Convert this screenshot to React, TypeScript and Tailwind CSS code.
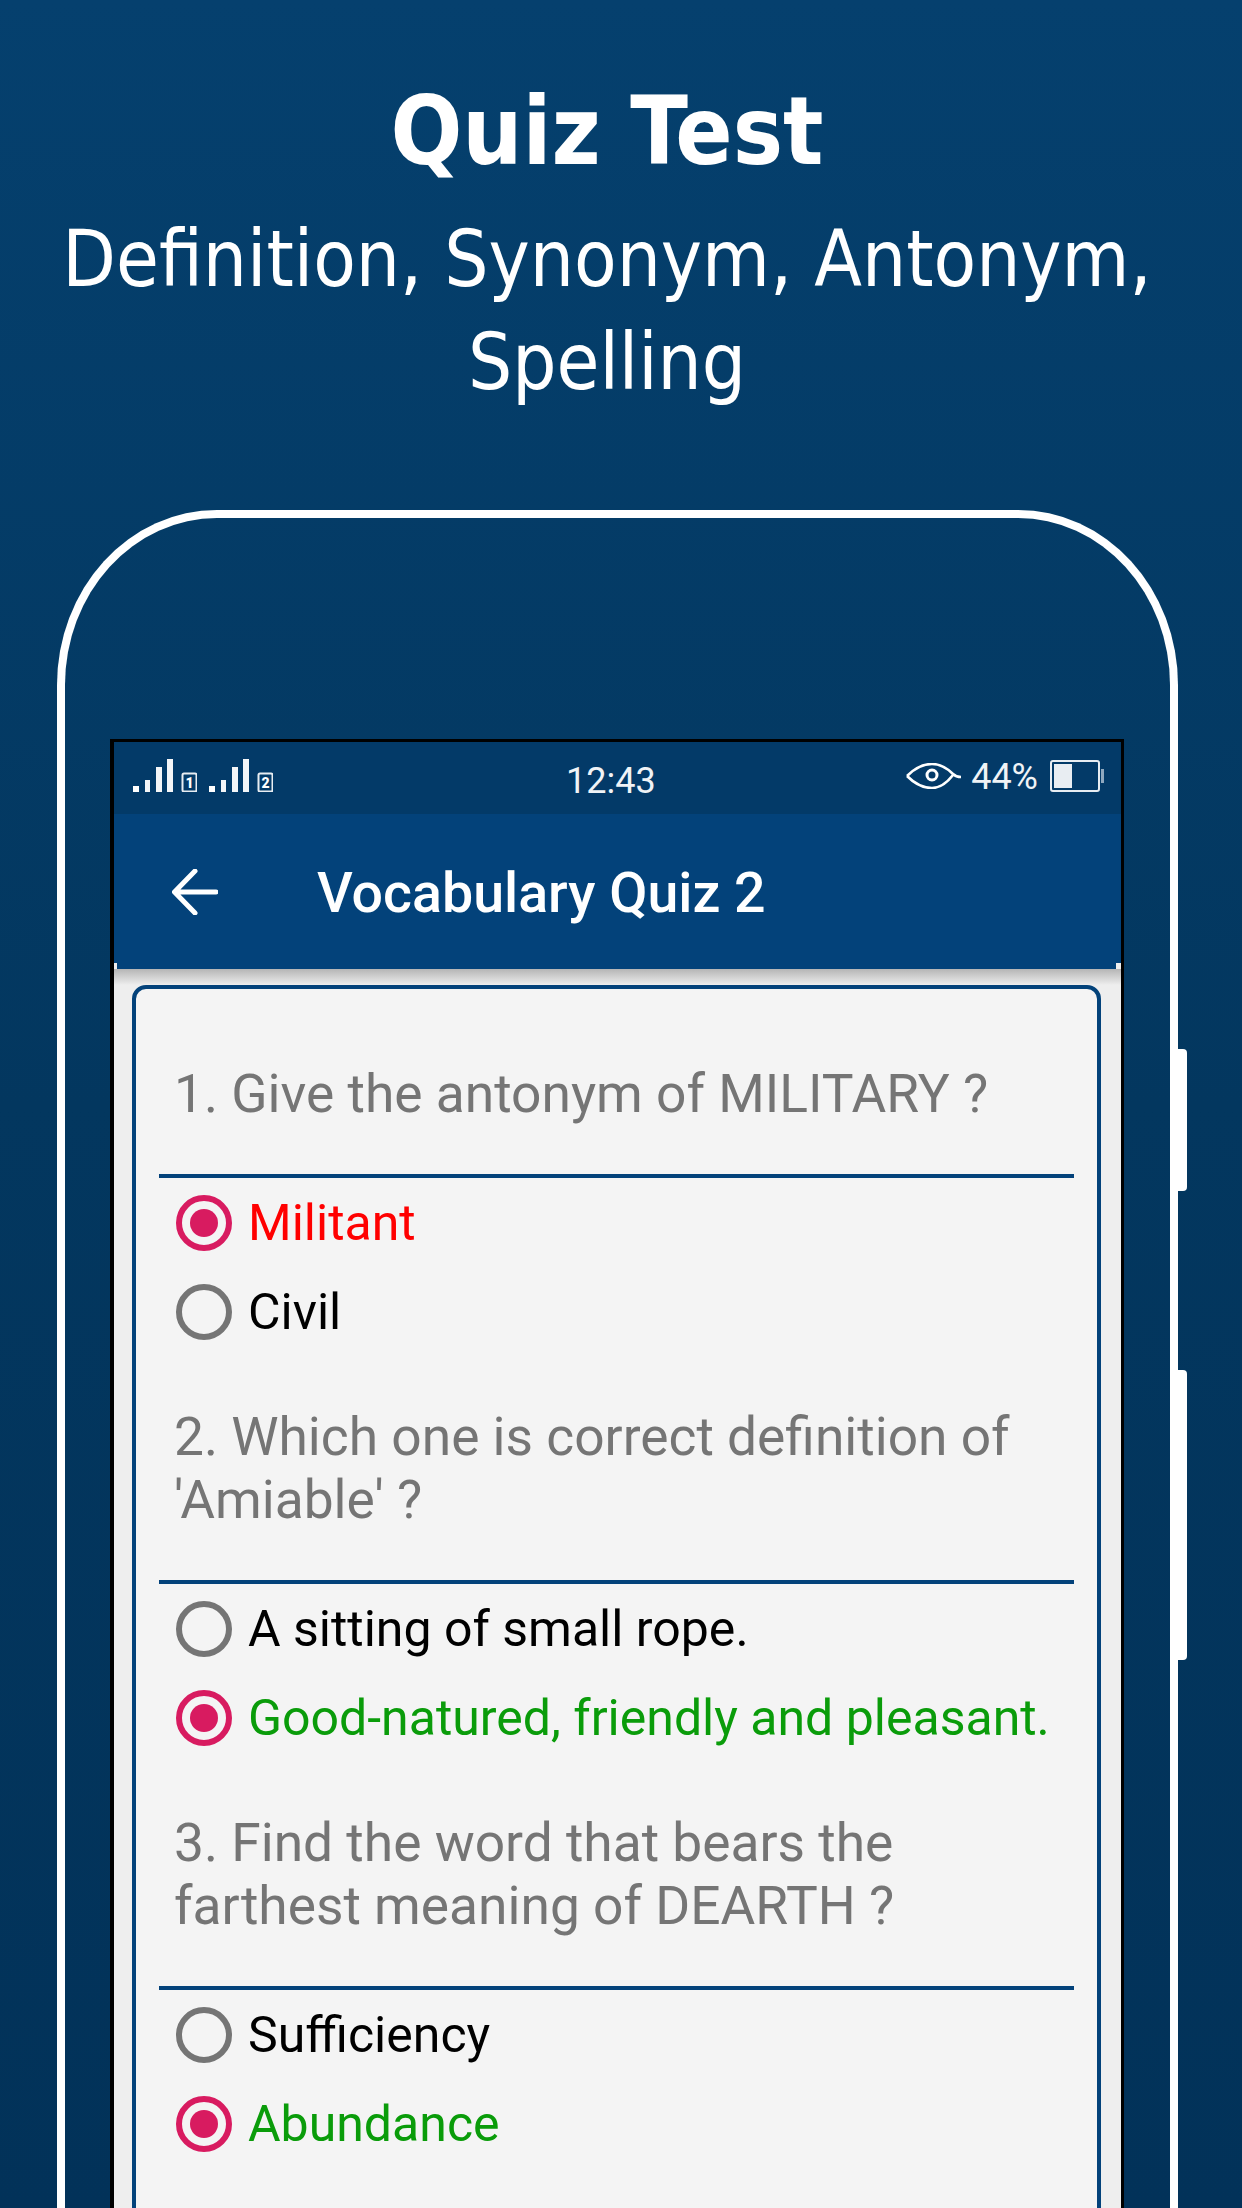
import React from "react";

const roboto = "font-['Roboto',sans-serif]";

function Signal({ num }: { num: string }) {
  return (
    <svg width="64" height="33" viewBox="0 0 64 33" className="block">
      <rect x="0" y="27" width="6" height="6" fill="#fff" />
      <rect x="12" y="21" width="5" height="12" fill="#f4f6f8" />
      <rect x="23" y="8" width="6" height="25" fill="#f4f6f8" />
      <rect x="34" y="0" width="6" height="33" fill="#f4f6f8" />
      <rect x="49.5" y="14.5" width="14" height="18" rx="1.5" fill="none" stroke="#e8edf2" strokeWidth="2" />
      <text x="56.5" y="29" textAnchor="middle" fontSize="14" fontWeight="900" fill="#fff" fontFamily="Roboto, sans-serif">
        {num}
      </text>
    </svg>
  );
}

function Radio({ checked }: { checked?: boolean }) {
  if (checked) {
    return (
      <div className="w-14 h-14 shrink-0 rounded-full border-[6px] border-[#d81b60] flex items-center justify-center">
        <div className="w-7 h-7 rounded-full bg-[#d81b60]"></div>
      </div>
    );
  }
  return <div className="w-14 h-14 shrink-0 rounded-full border-[6px] border-[#757575]"></div>;
}

function Option({ text, color, checked }: { text: string; color: string; checked?: boolean }) {
  return (
    <div className="h-[89px] flex items-center gap-[16px] pl-[17px]">
      <Radio checked={checked} />
      <span className={`text-[50px] leading-none whitespace-nowrap ${color}`}>{text}</span>
    </div>
  );
}

function Question({ pt, lines, options }: { pt: string; lines: string[]; options: React.ReactNode }) {
  return (
    <div>
      <div className={`${pt} pb-[48px] pl-[15px] text-[53.3px] leading-[63px] text-[#757575]`}>
        {lines.map((l) => (
          <div key={l} className="whitespace-nowrap">
            {l}
          </div>
        ))}
      </div>
      <div className="h-1 bg-[#03427a]"></div>
      {options}
    </div>
  );
}

export default function App() {
  return (
    <div className="w-[1242px] h-[2208px] overflow-hidden bg-gradient-to-b from-[#05406e] via-[#03375f] to-[#023259] flex flex-col">
      {/* heading */}
      <div className="h-[510px] shrink-0 flex flex-col items-center pt-[79px] pr-[28px] text-white font-['DejaVu_Sans',sans-serif]">
        <h1 className="text-[94px] leading-[106px] font-bold [font-stretch:condensed]">Quiz Test</h1>
        <p className="text-[77.5px] leading-[103px] mt-[23px] text-center whitespace-nowrap [font-stretch:condensed]">
          Definition, Synonym, Antonym,
          <br />
          Spelling
        </p>
      </div>

      {/* phone */}
      <div className="relative ml-[57px] w-[1121px] flex-1 border-x-[8px] border-t-[8px] border-white rounded-tl-[160px_175px] rounded-tr-[160px_175px] pt-[221px] pl-[45px] pr-[46px]">
        <div className="absolute right-[-17px] top-[531px] w-[9px] h-[142px] bg-white rounded-r-[4px]"></div>
        <div className="absolute right-[-17px] top-[852px] w-[9px] h-[290px] bg-white rounded-r-[4px]"></div>

        {/* screen */}
        <div className={`${roboto} h-full overflow-hidden border-l-[4px] border-t-[3px] border-black border-r-[3px] bg-[#eeeeee]`}>
          <div className="h-[72px] bg-[#033a68] relative flex items-center justify-between pl-[19px] pr-[17px] pb-[2px] text-white">
            <div className="flex gap-[12px] mt-[-3px]">
              <Signal num="1" />
              <Signal num="2" />
            </div>
            <span className="absolute left-[452px] top-[18px] text-[36px] leading-[42px] text-[#f0f3f6]">12:43</span>
            <div className="flex items-center mt-[-3px]">
              <svg width="56" height="26" viewBox="0 0 56 26" fill="none" stroke="#fff" strokeWidth="2.600">
                <path d="M1 13C9 5 17 1 26 1c9 0 15 4 21 10 2 2 5 3 8 3" />
                <path d="M1 13c8 8 16 12 25 12 8 0 14-4 21-13" />
                <circle cx="26" cy="12" r="5" strokeWidth="3" />
              </svg>
              <span className="ml-[9px] mt-[3px] text-[36px] leading-none text-[#f0f3f6]">44%</span>
              <svg width="54" height="32" viewBox="0 0 54 32" className="ml-[12px]" fill="none">
                <rect x="1" y="1" width="48" height="30" rx="2" stroke="#e8edf2" strokeWidth="2" />
                <rect x="4" y="4" width="18" height="24" fill="#e8edf2" />
                <rect x="51" y="9" width="3" height="14" fill="#8fa8bf" />
              </svg>
            </div>
          </div>

          <div className="relative h-[155px] bg-[#03427a] flex items-center pl-[58px]">
            <div className="absolute left-0 bottom-0 w-[3px] h-[6px] bg-[#eeeeee]"></div>
            <div className="absolute right-0 bottom-0 w-[5px] h-[6px] bg-[#eeeeee]"></div>
            <svg width="46" height="46" viewBox="0 0 46 46" fill="none" stroke="#fff" strokeWidth="5" strokeLinecap="round" strokeLinejoin="round">
              <path d="M44 23H3M23 2 2.500 23 23 44" />
            </svg>
            <span className="ml-[99px] mt-[4px] text-[55.500px] leading-none font-medium text-white">Vocabulary Quiz 2</span>
          </div>

          <div className="h-4 bg-gradient-to-b from-[#b5b5b5] to-[#eeeeee]"></div>

          <div className="ml-[18px] mr-[20px] border-[4px] border-[#03427a] rounded-[14px] bg-[#f4f4f4] px-[23px] pb-[200px]">
            <Question
              pt="pt-[74px]"
              lines={["1. Give the antonym of MILITARY ?"]}
              options={
                <>
                  <Option text="Militant" color="text-[#ff0000]" checked />
                  <Option text="Civil" color="text-black" />
                </>
              }
            />
            <Question
              pt="pt-[50px]"
              lines={["2. Which one is correct definition of", "'Amiable' ?"]}
              options={
                <>
                  <Option text="A sitting of small rope." color="text-black" />
                  <Option text="Good-natured, friendly and pleasant." color="text-[#0a9c0a]" checked />
                </>
              }
            />
            <Question
              pt="pt-[50px]"
              lines={["3. Find the word that bears the", "farthest meaning of DEARTH ?"]}
              options={
                <>
                  <Option text="Sufficiency" color="text-black" />
                  <Option text="Abundance" color="text-[#0a9c0a]" checked />
                </>
              }
            />
          </div>
        </div>
      </div>
    </div>
  );
}
